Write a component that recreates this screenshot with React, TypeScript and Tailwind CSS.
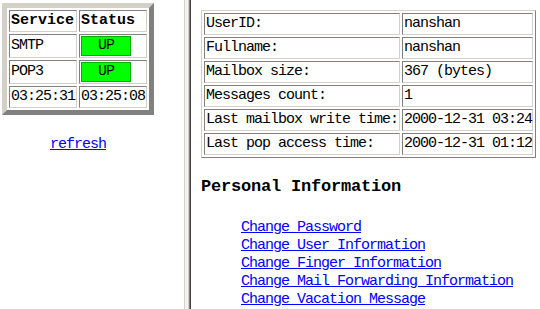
const cellInset =
  "border border-t-[#808080] border-l-[#808080] border-r-[#d4d0c8] border-b-[#d4d0c8] p-[1px] align-middle";

const services = [
  { name: "SMTP", status: "UP" },
  { name: "POP3", status: "UP" },
];

const accountRows: [string, string][] = [
  ["UserID:", "nanshan"],
  ["Fullname:", "nanshan"],
  ["Mailbox size:", "367 (bytes)"],
  ["Messages count:", "1"],
  ["Last mailbox write time:", "2000-12-31 03:24"],
  ["Last pop access time:", "2000-12-31 01:12"],
];

const links = [
  "Change Password",
  "Change User Information",
  "Change Finger Information",
  "Change Mail Forwarding Information",
  "Change Vacation Message",
];

const StatusBadge = ({ label }: { label: string }) => (
  <div className="h-[20px] w-[50px] border border-[#00b000] bg-[#00ff00] text-center leading-[18px]">
    {label}
  </div>
);

const ServicePanel = () => (
  <div className="w-[184px] shrink-0 pl-[2px] pt-[3px]">
    <table className="w-[152px] table-fixed border-separate border-spacing-[2px] border-[5px] border-t-[#d4d0c8] border-l-[#d4d0c8] border-r-[#808080] border-b-[#808080]">
      <tbody>
        <tr>
          <td className={`${cellInset} h-[22px] font-bold tracking-[0px]`}>Service</td>
          <td className={`${cellInset} h-[22px] font-bold tracking-[0px]`}>Status</td>
        </tr>
        {services.map((s) => (
          <tr key={s.name}>
            <td className={`${cellInset} h-[24px]`}>{s.name}</td>
            <td className={`${cellInset} h-[24px]`}>
              <StatusBadge label={s.status} />
            </td>
          </tr>
        ))}
        <tr>
          <td className={`${cellInset} h-[22px]`}>03:25:31</td>
          <td className={`${cellInset} h-[22px]`}>03:25:08</td>
        </tr>
      </tbody>
    </table>
    <div className="mt-[21px] w-[152px] text-center leading-[18px]">
      <a href="#" className="text-[#0000ff] underline">
        refresh
      </a>
    </div>
  </div>
);

const FrameDivider = () => (
  <div className="flex h-full shrink-0">
    <div className="w-[1px] bg-[#d4d0c8]" />
    <div className="w-[3px] bg-[#f4f3ef]" />
    <div className="w-[1px] bg-[#d4d0c8]" />
    <div className="w-[1px] bg-[#808080]" />
    <div className="w-[1px] bg-[#404040]" />
  </div>
);

const AccountPanel = () => (
  <div className="flex-1 pl-[10px] pt-[10px]">
    <table className="w-[335px] table-fixed border-separate border-spacing-[2px] border border-t-[#d4d0c8] border-l-[#d4d0c8] border-r-[#808080] border-b-[#808080]">
      <colgroup>
        <col className="w-[196px]" />
        <col />
      </colgroup>
      <tbody>
        {accountRows.map(([label, value]) => (
          <tr key={label}>
            <td className={`${cellInset} h-[22px] whitespace-nowrap`}>{label}</td>
            <td className={`${cellInset} h-[22px] whitespace-nowrap`}>{value}</td>
          </tr>
        ))}
      </tbody>
    </table>
    <h3 className="mt-[19px] text-[17px] font-bold leading-[20px] tracking-[-0.2px]">
      Personal Information
    </h3>
    <ul className="mt-[22px] pl-[40px]">
      {links.map((l) => (
        <li key={l} className="leading-[18px]">
          <a href="#" className="text-[#0000ff] underline">
            {l}
          </a>
        </li>
      ))}
    </ul>
  </div>
);

export default function App() {
  return (
    <div className="flex h-[309px] w-[540px] overflow-hidden bg-white text-[15px] leading-[18px] tracking-[-1px] text-black font-['Liberation_Mono','DejaVu_Sans_Mono',monospace]">
      <ServicePanel />
      <FrameDivider />
      <AccountPanel />
    </div>
  );
}
